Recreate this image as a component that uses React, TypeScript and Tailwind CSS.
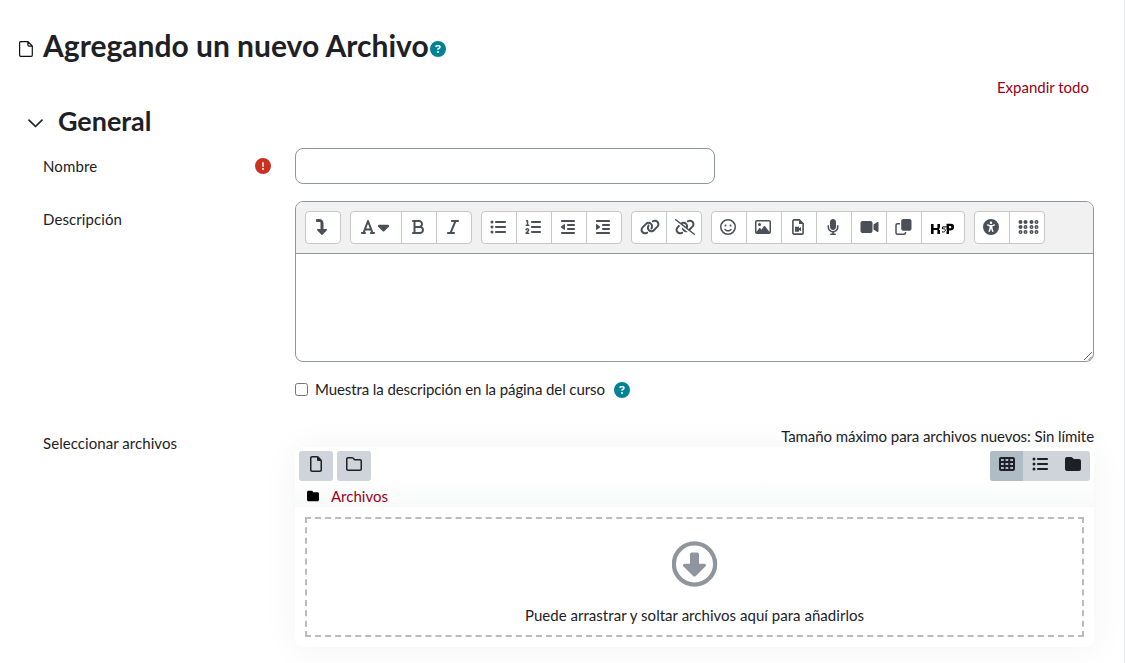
import type { ReactNode } from 'react';
import {
  FaBold, FaBraille, FaCaretDown, FaCircleExclamation, FaCircleQuestion, FaFolder, FaFont,
  FaIndent, FaItalic, FaLink, FaLinkSlash, FaListOl, FaListUl, FaMicrophone, FaOutdent,
  FaRegFaceSmile, FaRegFile, FaRegFolder, FaRegImage, FaTableCells, FaTurnDown,
  FaUniversalAccess, FaVideo,
} from 'react-icons/fa6';

function Group({ children }: { children: ReactNode }) {
  return (
    <div className="flex h-[33px] divide-x divide-[#c5c7c9] overflow-hidden rounded border border-[#c5c7c9] bg-white">
      {children}
    </div>
  );
}

function Tool({ children, width = 'w-[35px]' }: { children: ReactNode; width?: string }) {
  return <button className={`flex items-center justify-center pb-px pr-[2px] text-[16px] text-[#495057] last:w-[34px] ${width}`}>{children}</button>;
}

function PageIcon() {
  return (
    <svg width="14" height="16" viewBox="0 0 14 16" className="mr-[10px] mt-[15px] shrink-0 text-[#111]" fill="none" stroke="currentColor" strokeWidth="1.200">
      <path d="M1.600.7h7.300l4.400 4.400v9.200a1 1 0 0 1-1 1H1.600a1 1 0 0 1-1-1V1.700a1 1 0 0 1 1-1ZM8.900.7v3.400a1 1 0 0 0 1 1h3.400" />
    </svg>
  );
}

function CopyIcon() {
  return (
    <svg width="17" height="16" viewBox="0 0 17 16">
      <rect x="6.200" y="0" width="10.300" height="11.800" rx="2" fill="currentColor" />
      <path d="M5 4.800H2.500A1.500 1.500 0 0 0 1 6.300v7.400a1.500 1.500 0 0 0 1.500 1.500H9a1.500 1.500 0 0 0 1.500-1.500V13" fill="none" stroke="currentColor" strokeWidth="1.500" />
    </svg>
  );
}

function VideoFileIcon() {
  return (
    <svg width="12" height="16" viewBox="0 0 12 16">
      <path d="M2 .9h5.300L11.100 4.700V14a1.100 1.100 0 0 1-1.100 1.100H2A1.100 1.100 0 0 1 .9 14V2A1.100 1.100 0 0 1 2 .9Z" fill="none" stroke="currentColor" strokeWidth="1.600" />
      <path d="M7 1v4h4zM3 7.700h4v1.500l2-1.200v4.300l-2-1.200v1.600H3z" fill="currentColor" />
    </svg>
  );
}

function H5PMark() {
  return (
    <svg width="24" height="12" viewBox="0 0 24 12" className="ml-px mt-1 text-black">
      <path d="M0 1h2.600v3.900h3.800V1H9v2.800L8 7.100H2.600V11H0zM6.400 7.100H9V11H6.400zM15.500.8h4.300a3.300 3.300 0 0 1 0 6.600H18V11h-2.500zM18 3v2.300h1.200a1.150 1.150 0 0 0 0-2.300z" fill="currentColor" fillRule="evenodd" />
      <path d="M15.500 3.900h-4l-.4 2.100c2-.3 3.300.2 3.300 1.400 0 1.300-1.400 1.900-3.200 1.600" fill="none" stroke="white" strokeWidth="2.400" />
      <path d="M16 3.900h-4.300l-.4 1.900c2-.3 3.100.2 3.100 1.400 0 1.400-1.500 2.100-3.400 1.700" fill="none" stroke="currentColor" strokeWidth="1" />
    </svg>
  );
}

function DropArrow() {
  return (
    <svg width="46" height="46" viewBox="0 0 46 46" className="mt-[22px] shrink-0 text-[#8f959e]">
      <circle cx="22.500" cy="23" r="20.600" fill="none" stroke="currentColor" strokeWidth="4.200" />
      <path d="M19.800 11.500h5.400a1.800 1.800 0 0 1 1.800 1.800v9.400h5.300a1.600 1.600 0 0 1 1.100 2.800L23.800 35a2 2 0 0 1-2.700 0L11.500 25.500a1.600 1.600 0 0 1 1.100-2.800h5.400v-9.400a1.800 1.800 0 0 1 1.800-1.800Z" fill="currentColor" />
    </svg>
  );
}

export default function App() {
  return (
    <div className="h-[663px] w-[1125px] overflow-hidden border-r border-[#eceff2] bg-white font-['Lato',sans-serif] text-[15px] leading-[22px] text-[#1d2125]">
      <header className="flex h-[76px] items-start pl-[19px] pt-[26px]">
        <PageIcon />
        <h1 className="-mt-px w-[386px] whitespace-nowrap text-[30px] font-bold leading-10">Agregando un nuevo Archivo</h1>
        <FaCircleQuestion className="ml-px mt-[15px] size-4 shrink-0 text-[#008196]" />
      </header>
      <div className="flex h-[30px] justify-end pr-[35px]">
        <a className="text-[#980019]">Expandir todo</a>
      </div>
      <div className="flex h-[42px] items-start pl-7">
        <svg width="15" height="9" viewBox="0 0 15 9" className="mt-[13px]" fill="none" stroke="currentColor" strokeWidth="1.700" strokeLinecap="round" strokeLinejoin="round">
          <path d="m1 1.200 6.500 6.300L14 1.200" />
        </svg>
        <h2 className="-mt-px ml-[15px] text-[26.900px] font-bold leading-8">General</h2>
      </div>

      <div className="flex h-[53px] pl-[43px]">
        <label className="w-[212px] pt-[7px] tracking-[0.15px]">Nombre</label>
        <FaCircleExclamation className="mr-6 mt-[10px] size-4 text-[#ca3120]" />
        <input className="h-9 w-[420px] rounded-lg border border-[#8f959e] px-3" />
      </div>

      <div className="flex h-[178px] pl-[43px]">
        <label className="w-[252px] pt-[7px] tracking-[0.1px]">Descripción</label>
        <div className="flex h-[161px] w-[799px] flex-col overflow-hidden rounded-lg border border-[#8f959e]">
          <div className="flex h-[52px] shrink-0 gap-[9px] border-b border-[#8f959e] bg-[#f1f1f1] pl-[9px] pt-[9px]">
            <Group><Tool><FaTurnDown /></Tool></Group>
            <Group>
              <Tool width="w-[51px]"><FaFont /><FaCaretDown className="ml-px h-[18px] w-[13px]" /></Tool>
              <Tool><FaBold /></Tool>
              <Tool><FaItalic /></Tool>
            </Group>
            <Group>
              <Tool><FaListUl /></Tool>
              <Tool><FaListOl /></Tool>
              <Tool><FaOutdent /></Tool>
              <Tool><FaIndent /></Tool>
            </Group>
            <Group>
              <Tool><FaLink className="ml-1 h-4 w-5" /></Tool>
              <Tool><FaLinkSlash className="ml-1 h-4 w-5" /></Tool>
            </Group>
            <Group>
              <Tool><FaRegFaceSmile /></Tool>
              <Tool><FaRegImage /></Tool>
              <Tool><VideoFileIcon /></Tool>
              <Tool><FaMicrophone /></Tool>
              <Tool><FaVideo className="ml-[2px] h-4 w-[19px]" /></Tool>
              <Tool><CopyIcon /></Tool>
              <Tool width="last:w-[42px]"><H5PMark /></Tool>
            </Group>
            <Group>
              <Tool><FaUniversalAccess /></Tool>
              <Tool><FaBraille className="ml-1 h-4 w-[21px]" /></Tool>
            </Group>
          </div>
          <div className="flex grow items-end justify-end">
            <svg width="10" height="10" viewBox="0 0 10 10" stroke="#555" strokeWidth=".9">
              <path d="M1 9 9 1M5.500 9 9 5.500" />
            </svg>
          </div>
        </div>
      </div>

      <div className="flex h-[47px] items-start pl-[295px]">
        <input type="checkbox" className="mt-[4px] size-[13px]" />
        <span className="-mt-px ml-[7px] tracking-[-0.090px]">Muestra la descripción en la página del curso</span>
        <FaCircleQuestion className="ml-[9px] mt-[3px] size-4 text-[#008196]" />
      </div>

      <div className="flex pl-[43px]">
        <div className="w-[252px] pt-[6px] tracking-[0.060px]">Seleccionar archivos</div>
        <div className="w-[799px]">
          <p className="relative z-10 -mt-px h-[22px] text-right tracking-[-0.070px]">Tamaño máximo para archivos nuevos: Sin límite</p>
          <section className="h-[200px] rounded-lg bg-white shadow-[0_2px_36px_rgba(0,0,0,0.05)]">
            <div className="h-[60px] rounded-t-lg bg-linear-to-b from-white from-50% to-[#f8f9f9] px-1 pt-1">
              <div className="flex gap-1 text-[16px]">
                <button className="flex h-[30px] w-[34px] items-start justify-center rounded-[3px] bg-[#ced4da] pr-px pt-[5px]"><FaRegFile /></button>
                <button className="flex h-[30px] w-[34px] items-start justify-center rounded-[3px] bg-[#ced4da] pr-px pt-[5px]"><FaRegFolder /></button>
                <div className="ml-auto flex h-[30px] w-[100px] overflow-hidden rounded-[3px] bg-[#ced4da]">
                  <button className="flex w-[33px] justify-center bg-[#afbbc5] pt-[5px]"><FaTableCells /></button>
                  <button className="flex w-[33px] justify-center pt-[5px]"><FaListUl /></button>
                  <button className="flex w-[34px] justify-center pt-[5px]"><FaFolder /></button>
                </div>
              </div>
              <div className="flex items-center pl-2 pt-1">
                <FaFolder className="size-3 text-black" />
                <a className="ml-3 text-[#980019]">Archivos</a>
              </div>
            </div>
            <div className="px-[10px] pt-[10px]">
              <div className="flex h-[120px] flex-col items-center border-2 border-dashed border-[#bbb]">
                <DropArrow />
                <p className="mt-[17px] tracking-[0.030px]">Puede arrastrar y soltar archivos aquí para añadirlos</p>
              </div>
            </div>
          </section>
        </div>
      </div>
    </div>
  );
}
